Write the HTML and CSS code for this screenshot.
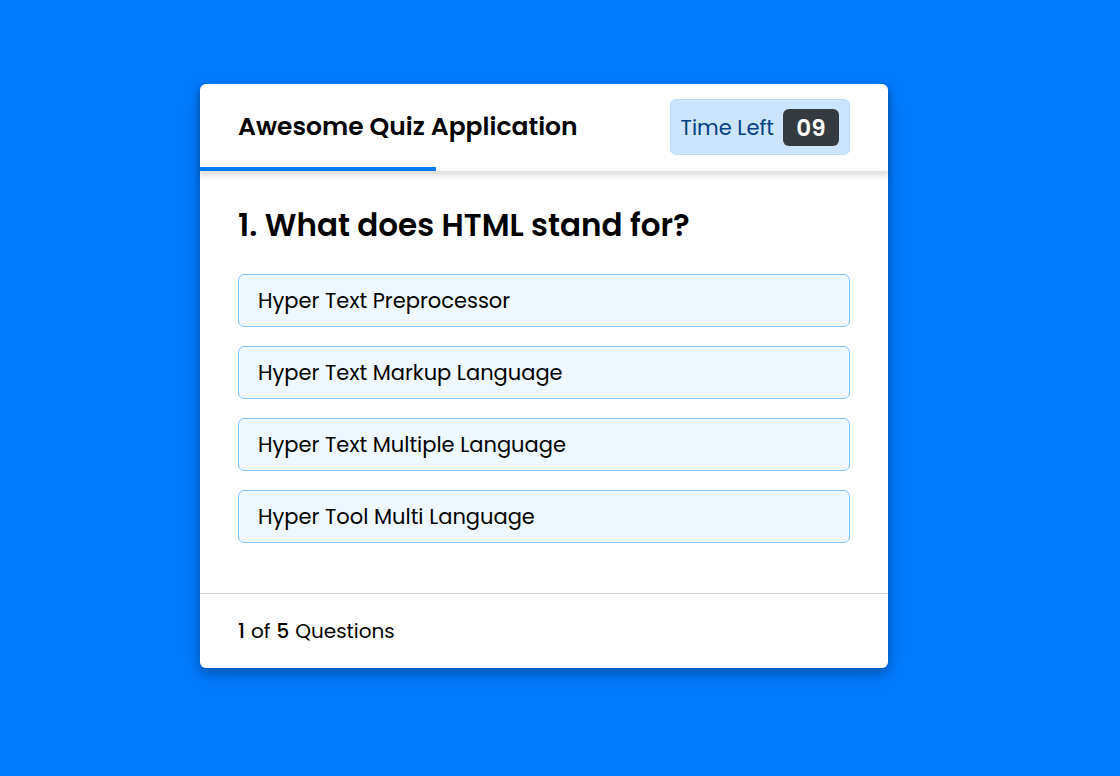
FILE: index.html
```html
<!DOCTYPE html>
<html lang="en">
<head>
<meta charset="utf-8">
<meta name="viewport" content="width=device-width, initial-scale=1">
<title>Awesome Quiz Application</title>
<link rel="stylesheet" href="styles.css">
</head>
<body>
<main class="quiz">
  <header class="quiz-header">
    <h1 class="title">Awesome Quiz Application</h1>
    <div class="timer">
      <span class="timer-label">Time Left</span>
      <span class="timer-value">09</span>
    </div>
    <div class="time-line"></div>
  </header>
  <section class="quiz-body">
    <h2 class="question">1. What does HTML stand for?</h2>
    <div class="options">
      <button type="button" class="option">Hyper Text Preprocessor</button>
      <button type="button" class="option">Hyper Text Markup Language</button>
      <button type="button" class="option">Hyper Text Multiple Language</button>
      <button type="button" class="option">Hyper Tool Multi Language</button>
    </div>
  </section>
  <footer class="quiz-footer">
    <p class="count"><b>1</b> <span>of</span> <b>5</b> <span>Questions</span></p>
  </footer>
</main>
</body>
</html>
```

FILE: styles.css
```css
* {
  box-sizing: border-box;
  margin: 0;
}

body {
  min-height: 100vh;
  display: flex;
  align-items: center;
  justify-content: center;
  padding: 0 32px 24px 0;
  background: #007bff;
  color: #000;
  font-family: Poppins, Inter, "Open Sans", sans-serif;
}

.quiz {
  width: 100%;
  max-width: 688px;
  background: #fff;
  border-radius: 6px;
  box-shadow: 0 4px 8px rgba(0, 0, 0, 0.2), 0 6px 20px rgba(0, 0, 0, 0.19);
}

.quiz-header {
  position: relative;
  display: flex;
  align-items: center;
  justify-content: space-between;
  padding: 15px 38px 16px;
  border-radius: 6px 6px 0 0;
  box-shadow: 0 4px 5px 1px rgba(0, 0, 0, 0.12);
}

.title {
  font-size: 25px;
  font-weight: 600;
  line-height: 36px;
}

.timer {
  display: flex;
  align-items: center;
  gap: 9px;
  padding: 9px 10px 8px;
  background: #cce5ff;
  border: 1px solid #b8daff;
  border-radius: 6px;
  color: #004085;
}

.timer-label {
  font-size: 21px;
  line-height: 36px;
}

.timer-value {
  width: 56px;
  padding-top: 2px;
  background: #343a40;
  border-radius: 6px;
  color: #fff;
  font-size: 23px;
  font-weight: 600;
  line-height: 35px;
  text-align: center;
}

.time-line {
  position: absolute;
  left: 0;
  bottom: 0;
  width: 236px;
  height: 4px;
  background: #007bff;
}

.quiz-body {
  padding: 32px 38px 50px;
}

.question {
  font-size: 31px;
  font-weight: 600;
  line-height: 44px;
}

.options {
  display: flex;
  flex-direction: column;
  gap: 19px;
  padding-top: 27px;
}

.option {
  padding: 8px 19px;
  background: #eff7ff;
  border: 1px solid #84c5fe;
  border-radius: 6px;
  color: #000;
  font-family: inherit;
  font-size: 21px;
  line-height: 35px;
  text-align: left;
  cursor: pointer;
}

.quiz-footer {
  padding: 20px 38px;
  border-top: 1px solid #d3d3d3;
}

.count {
  display: flex;
  gap: 6px;
  font-size: 20px;
  line-height: 34px;
}

.count b {
  font-weight: 500;
}
```
